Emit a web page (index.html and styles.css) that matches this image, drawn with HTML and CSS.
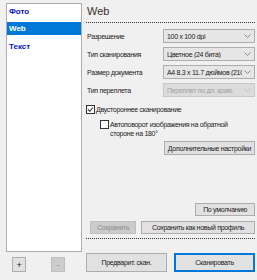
FILE: index.html
```html
<!DOCTYPE html>
<html>
<head>
    <meta charset='utf-8'>
    <title>Профили сканирования</title>
    <link rel="stylesheet" href="styles.css">
</head>
<body>
    <div class="app">
        <aside class="side">
            <ul class="profiles">
                <li class="profile">Фото</li>
                <li class="profile selected">Web</li>
                <li class="profile">Текст</li>
            </ul>
            <div class="side-tools">
                <button class="btn btn-sq" type="button">+</button>
                <button class="btn btn-sq" type="button" disabled>-</button>
            </div>
        </aside>
        <main class="panel">
            <h1 class="title">Web</h1>
            <div class="fields">
                <div class="row">
                    <span class="label">Разрешение</span>
                    <div class="combo"><span>100 x 100 dpi</span><svg width="7" height="4" viewBox="0 0 7 4"><path d="M0.5 0.5 L3.5 3.5 L6.5 0.5" fill="none" stroke="#8a8a8a"/></svg></div>
                </div>
                <div class="row">
                    <span class="label">Тип сканирования</span>
                    <div class="combo"><span>Цветное (24 бита)</span><svg width="7" height="4" viewBox="0 0 7 4"><path d="M0.5 0.5 L3.5 3.5 L6.5 0.5" fill="none" stroke="#8a8a8a"/></svg></div>
                </div>
                <div class="row">
                    <span class="label">Размер документа</span>
                    <div class="combo"><span>A4 8.3 x 11.7 дюймов (210</span><svg width="7" height="4" viewBox="0 0 7 4"><path d="M0.5 0.5 L3.5 3.5 L6.5 0.5" fill="none" stroke="#8a8a8a"/></svg></div>
                </div>
                <div class="row">
                    <span class="label">Тип переплета</span>
                    <div class="combo disabled"><span>Переплет по дл. краю</span><svg width="7" height="4" viewBox="0 0 7 4"><path d="M0.5 0.5 L3.5 3.5 L6.5 0.5" fill="none" stroke="#c0c0c0"/></svg></div>
                </div>
            </div>
            <label class="check">
                <span class="box"><svg width="7" height="7" viewBox="0 0 7 7"><path d="M1 3.5 L2.8 5.3 L6 1.5" fill="none" stroke="#333" stroke-width="1.1"/></svg></span>
                <span>Двустороннее сканирование</span>
            </label>
            <label class="check sub">
                <span class="box"></span>
                <span>Автоповорот изображения на обратной<br>стороне на 180°</span>
            </label>
            <div class="right">
                <button class="btn btn-wide" type="button">Дополнительные настройки</button>
            </div>
            <div class="spacer"></div>
            <div class="right">
                <button class="btn btn-default" type="button">По умолчанию</button>
            </div>
            <div class="save-row">
                <button class="btn btn-save" type="button" disabled>Сохранить</button>
                <button class="btn btn-saveas" type="button">Сохранить как новый профиль</button>
            </div>
            <div class="actions">
                <button class="btn btn-big" type="button">Предварит. скан.</button>
                <button class="btn btn-big primary" type="button">Сканировать</button>
            </div>
        </main>
    </div>
</body>
</html>
```

FILE: styles.css
```css
html, body {
    margin: 0;
    padding: 0;
}
body {
    width: 257px;
    height: 280px;
    background: #f0f0f0;
    font-family: "Liberation Sans", Arial, sans-serif;
    font-size: 7px;
    letter-spacing: -0.3px;
    color: #1a1a1a;
    overflow: hidden;
}
.app {
    display: flex;
    height: 280px;
}
.side {
    width: 76px;
    margin-left: 6px;
    padding-top: 3px;
    display: flex;
    flex-direction: column;
}
.profiles {
    list-style: none;
    margin: 0;
    padding: 1px 0 0;
    background: #fff;
    border: 1px solid #adadad;
    box-sizing: border-box;
    height: 249px;
}
.profile {
    height: 13px;
    line-height: 13px;
    padding-left: 2px;
    margin-bottom: 1px;
    color: #0a14c8;
    font-weight: bold;
    font-size: 8px;
    letter-spacing: 0;
}
.profile.selected {
    margin-top: 4px;
    margin-bottom: 5px;
    background: #0078d7;
    color: #fff;
}
.side-tools {
    display: flex;
    gap: 25px;
    margin-top: 5px;
    padding-left: 6px;
}
.btn {
    font-family: inherit;
    font-size: 7px;
    letter-spacing: -0.3px;
    color: #1a1a1a;
    background: #e1e1e1;
    border: 1px solid #adadad;
    padding: 0;
    margin: 0;
    box-sizing: border-box;
    white-space: nowrap;
}
.btn:disabled {
    background: #cccccc;
    border-color: #bfbfbf;
    color: #8a8a8a;
}
.btn-sq {
    width: 14px;
    height: 15px;
    font-size: 9px;
    line-height: 12px;
}
.panel {
    width: 169px;
    margin-left: 4px;
    display: flex;
    flex-direction: column;
}
.title {
    margin: 0;
    height: 23px;
    padding: 5px 0 0 1px;
    box-sizing: border-box;
    font-size: 11px;
    font-weight: normal;
    letter-spacing: 0;
    line-height: 13px;
    color: #333;
    border-bottom: 1px dotted #333;
}
.fields {
    padding-top: 6px;
    display: flex;
    flex-direction: column;
    gap: 4px;
}
.row {
    display: flex;
    align-items: center;
    height: 14px;
}
.label {
    width: 76px;
    padding-left: 1px;
}
.combo {
    width: 92px;
    height: 14px;
    box-sizing: border-box;
    border: 1px solid #adadad;
    background: #e6e6e6;
    display: flex;
    align-items: center;
    padding: 0 3px 0 3px;
    gap: 2px;
}
.combo span {
    flex: 1;
    white-space: nowrap;
    overflow: hidden;
}
.combo.disabled {
    background: #dcdcdc;
    border-color: #c8c8c8;
    color: #a0a0a0;
}
.check {
    display: flex;
    align-items: flex-start;
    gap: 1px;
    line-height: 9px;
    margin-top: 8px;
}
.check .box {
    width: 9px;
    height: 9px;
    box-sizing: border-box;
    border: 1px solid #333;
    background: #fff;
    display: flex;
    align-items: center;
    justify-content: center;
    flex: none;
}
.check.sub {
    margin-top: 6px;
    padding-left: 14px;
}
.right {
    display: flex;
    justify-content: flex-end;
}
.btn-wide {
    width: 91px;
    height: 14px;
    margin-top: 3px;
}
.spacer {
    flex: 1;
}
.btn-default {
    width: 60px;
    height: 13px;
}
.save-row {
    display: flex;
    gap: 5px;
    margin-top: 5px;
    padding-bottom: 4px;
    border-bottom: 1px dotted #333;
}
.btn-save {
    width: 46px;
    height: 13px;
    margin-left: 4px;
}
.btn-saveas {
    width: 114px;
    height: 13px;
}
.actions {
    display: flex;
    justify-content: space-between;
    margin-top: 14px;
    margin-bottom: 8px;
}
.btn-big {
    width: 81px;
    height: 19px;
}
.btn-big.primary {
    border: 1px solid #0078d7;
    box-shadow: inset 0 0 0 1px #0078d7;
}
```
